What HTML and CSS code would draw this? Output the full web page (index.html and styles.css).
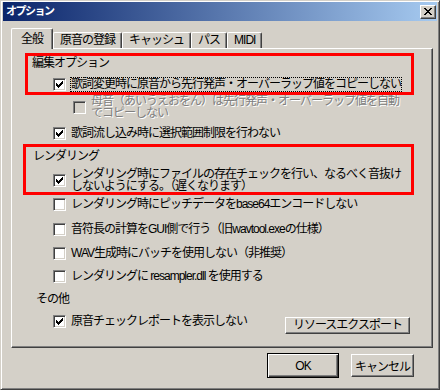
FILE: index.html
```html
<!DOCTYPE html>
<html lang="ja">
<head>
    <meta charset="UTF-8">
    <title>オプション</title>
    <link rel="stylesheet" href="styles.css">
</head>
<body>
    <div class="window">
        <div class="titlebar">
            <span class="title">オプション</span>
            <span class="close">
                <svg width="8" height="7" viewBox="0 0 8 7"><path d="M0 0h2v1h-2zM6 0h2v1h-2zM1 1h2v1h-2zM5 1h2v1h-2zM2 2h4v1h-4zM3 3h2v1h-2zM2 4h4v1h-4zM1 5h2v1h-2zM5 5h2v1h-2zM0 6h2v1h-2zM6 6h2v1h-2z"/></svg>
            </span>
        </div>
        <div class="content">
            <ul class="tabs">
                <li class="tab current">全般</li>
                <li class="tab">原音の登録</li>
                <li class="tab">キャッシュ</li>
                <li class="tab">パス</li>
                <li class="tab">MIDI</li>
            </ul>
            <div class="panel">
                <div class="group group-edit">
                    <div class="heading">編集オプション</div>
                    <label class="check first">
                        <span class="box"><svg width="7" height="7" viewBox="0 0 7 7"><path d="M6 0h1v1h-1zM5 1h2v1h-2zM0 2h1v1h-1zM4 2h3v1h-3zM0 3h2v1h-2zM3 3h3v1h-3zM0 4h5v1h-5zM1 5h3v1h-3zM2 6h1v1h-1z"/></svg></span>
                        <span class="text focus">歌詞変更時に原音から先行発声・オーバーラップ値をコピーしない</span>
                    </label>
                </div>
                <label class="check disabled">
                    <span class="box"></span>
                    <span class="text">母音（あいうえおをん）は先行発声・オーバーラップ値を自動<br>でコピーしない</span>
                </label>
                <label class="check after-disabled">
                    <span class="box"><svg width="7" height="7" viewBox="0 0 7 7"><path d="M6 0h1v1h-1zM5 1h2v1h-2zM0 2h1v1h-1zM4 2h3v1h-3zM0 3h2v1h-2zM3 3h3v1h-3zM0 4h5v1h-5zM1 5h3v1h-3zM2 6h1v1h-1z"/></svg></span>
                    <span class="text">歌詞流し込み時に選択範囲制限を行わない</span>
                </label>

                <div class="group group-render">
                    <div class="heading">レンダリング</div>
                    <label class="check first two-lines">
                        <span class="box"><svg width="7" height="7" viewBox="0 0 7 7"><path d="M6 0h1v1h-1zM5 1h2v1h-2zM0 2h1v1h-1zM4 2h3v1h-3zM0 3h2v1h-2zM3 3h3v1h-3zM0 4h5v1h-5zM1 5h3v1h-3zM2 6h1v1h-1z"/></svg></span>
                        <span class="text">レンダリング時にファイルの存在チェックを行い、なるべく音抜け<br>しないようにする。（遅くなります）</span>
                    </label>
                </div>
                <label class="check r1">
                    <span class="box"></span>
                    <span class="text">レンダリング時にピッチデータをbase64エンコードしない</span>
                </label>
                <label class="check r2">
                    <span class="box"></span>
                    <span class="text">音符長の計算をGUI側で行う（旧wavtool.exeの仕様）</span>
                </label>
                <label class="check r3">
                    <span class="box"></span>
                    <span class="text">WAV生成時にバッチを使用しない（非推奨）</span>
                </label>
                <label class="check">
                    <span class="box"></span>
                    <span class="text">レンダリングに resampler.dll を使用する</span>
                </label>

                <div class="heading other">その他</div>
                <div class="last-row">
                    <label class="check">
                        <span class="box"><svg width="7" height="7" viewBox="0 0 7 7"><path d="M6 0h1v1h-1zM5 1h2v1h-2zM0 2h1v1h-1zM4 2h3v1h-3zM0 3h2v1h-2zM3 3h3v1h-3zM0 4h5v1h-5zM1 5h3v1h-3zM2 6h1v1h-1z"/></svg></span>
                        <span class="text">原音チェックレポートを表示しない</span>
                    </label>
                    <button class="btn btn-export">リソースエクスポート</button>
                </div>
            </div>
            <div class="buttons">
                <button class="btn btn-ok">OK</button>
                <button class="btn btn-cancel">キャンセル</button>
            </div>
        </div>
    </div>
</body>
</html>
```
FILE: styles.css
```css
* {
    margin: 0;
    padding: 0;
    box-sizing: border-box;
}
ul {
    list-style: none;
}
body {
    font-family: "Liberation Sans", "Noto Sans CJK JP", sans-serif;
    font-size: 12px;
    color: #000;
    background-color: #d4d0c8;
}
.window {
    width: 440px;
    height: 390px;
    background-color: #d4d0c8;
    border: 1px solid;
    border-color: #d4d0c8 #404040 #404040 #d4d0c8;
    box-shadow: inset 1px 1px #fff, inset -1px -1px #808080;
    padding: 1px 2px 2px;
}
.titlebar {
    height: 19px;
    display: flex;
    align-items: center;
    justify-content: space-between;
    padding: 0 1px 0 3px;
    background: linear-gradient(to right, #0a246a, #a6caf0);
}
.title {
    color: #fff;
    font-size: 11px;
    font-weight: bold;
    letter-spacing: -1.5px;
    line-height: 19px;
}
.close {
    width: 16px;
    height: 14px;
    display: flex;
    align-items: center;
    justify-content: center;
    background-color: #d4d0c8;
    border: 1px solid;
    border-color: #fff #404040 #404040 #fff;
    box-shadow: inset -1px -1px #808080;
}
.close svg {
    display: block;
    margin-left: -1px;
}

/* tabs */
.tabs {
    display: flex;
    align-items: flex-end;
    height: 21px;
    margin: 7px 0 -1px 8px;
    position: relative;
    z-index: 1;
}
.tab {
    height: 16px;
    line-height: 15px;
    padding: 0 6px;
    margin-bottom: 1px;
    letter-spacing: -1px;
    background-color: #d4d0c8;
    border: 1px solid;
    border-bottom: none;
    border-color: #fff #404040 #404040 #fff;
    border-radius: 2px 2px 0 0;
    box-shadow: inset -1px 0 #808080;
}
.tab.current {
    height: 21px;
    line-height: 20px;
    padding: 0 9px;
    margin-bottom: 0;
}
.panel {
    width: 422px;
    height: 300px;
    margin-left: 8px;
    border: 1px solid;
    border-color: #fff #404040 #404040 #fff;
    box-shadow: inset -1px -1px #808080;
}

/* groups and rows */
.group {
    outline: 3px solid #f00;
}
.group-edit {
    margin: 7px 21px 0 16px;
}
.group-render {
    margin: 7px 21px 0 14px;
    padding-top: 2px;
}
.heading {
    height: 14px;
    line-height: 14px;
    letter-spacing: -1px;
    white-space: nowrap;
}
.group-edit .heading {
    padding-left: 4px;
}
.group-render .heading {
    padding-left: 7px;
}
.heading.other {
    margin: 9px 0 0 24px;
}
.check {
    display: flex;
    align-items: center;
    height: 14px;
    margin: 9px 0 0 41px;
}
.group-edit .check {
    margin: 7px 0 0 25px;
    height: 15px;
}
.group-render .check {
    margin: 5px 0 0 27px;
}
.check.two-lines {
    height: 24px;
}
.check.disabled {
    height: 24px;
    margin: 3px 0 0 61px;
}
.check.after-disabled {
    margin-top: 7px;
}
.check.r1 {
    margin-top: 5px;
}
.check.r2 {
    margin-top: 11px;
}
.check.r3 {
    margin-top: 10px;
}
.box {
    flex: none;
    width: 13px;
    height: 13px;
    display: flex;
    align-items: center;
    justify-content: center;
    background-color: #fff;
    border: 1px solid;
    border-color: #808080 #fff #fff #808080;
    box-shadow: inset 1px 1px #404040, inset -1px -1px #d4d0c8;
}
.box svg {
    display: block;
}
.disabled .box {
    background-color: #d4d0c8;
}
.text {
    margin-left: 5px;
    line-height: 12px;
    letter-spacing: -1px;
    white-space: nowrap;
}
.text.focus {
    line-height: 13px;
    outline: 1px dotted #000;
}
.disabled .text {
    color: #808080;
    text-shadow: 1px 1px #fff;
}
.last-row {
    display: flex;
    align-items: flex-start;
    margin-top: 8px;
}
.last-row .check {
    margin-top: 0;
}

/* buttons */
.btn {
    font: inherit;
    letter-spacing: -1px;
    color: #000;
    background-color: #d4d0c8;
    border: 1px solid;
    border-color: #fff #404040 #404040 #fff;
    box-shadow: inset -1px -1px #808080;
}
.btn-export {
    width: 125px;
    height: 17px;
    line-height: 13px;
    margin: 3px 22px 0 auto;
}
.buttons {
    display: flex;
    align-items: center;
    justify-content: flex-end;
    gap: 12px;
    margin: 5px 23px 0 0;
}
.btn-ok {
    width: 72px;
    height: 25px;
    border: 1px solid #000;
    box-shadow: inset 1px 1px #fff, inset -1px -1px #404040, inset -2px -2px #808080;
}
.btn-cancel {
    width: 63px;
    height: 23px;
}
```
